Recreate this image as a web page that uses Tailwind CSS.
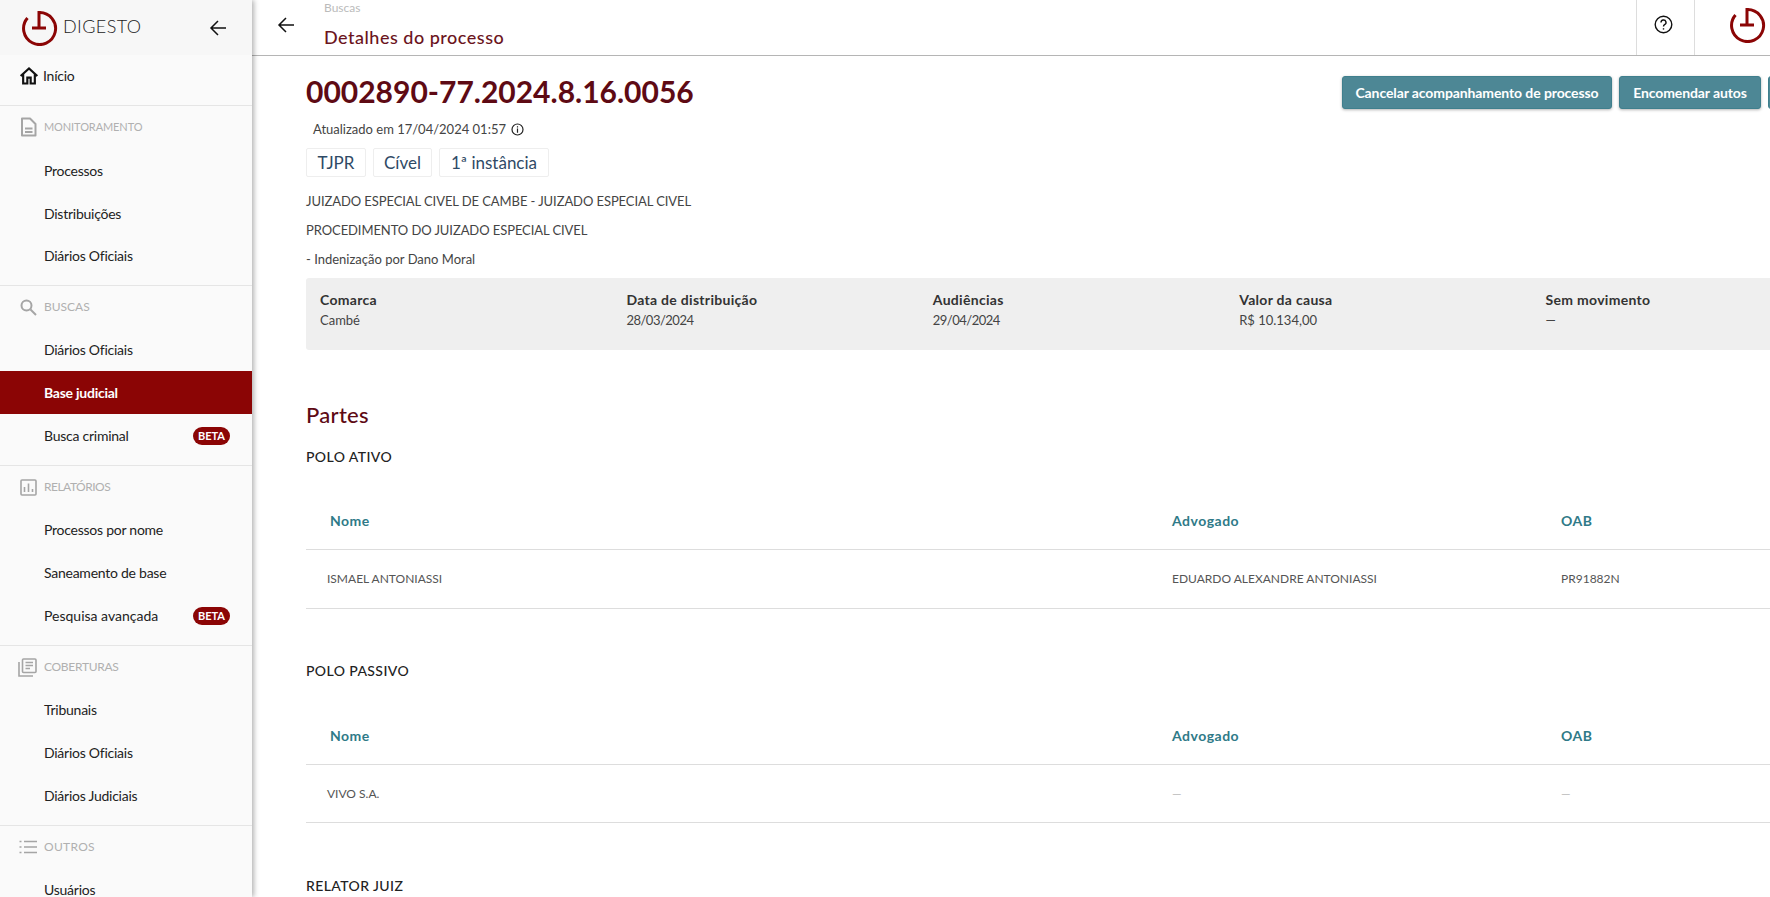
<!DOCTYPE html>
<html lang="pt-BR">
<head>
<meta charset="utf-8">
<title>Detalhes do processo</title>
<script src="https://cdn.jsdelivr.net/npm/@tailwindcss/browser@4"></script>
</head>
<body class="font-['Lato',sans-serif] bg-white text-[#222]">
<div class="flex h-[897px] w-[1770px] overflow-hidden">

  <!-- Sidebar -->
  <aside class="relative z-10 h-full w-[252px] shrink-0 overflow-hidden bg-[#fafafa] tracking-[-0.25px] shadow-[2px_0_5px_rgba(0,0,0,0.3)]">
    <div class="flex h-[55px] items-center bg-[#f7f7f7] pl-[22px]">
      <svg class="h-[36px] w-[36px] shrink-0" viewBox="0 0 36 36" fill="none" stroke="#8b0505" stroke-width="3">
        <path d="M17.5 2.5A16 16 0 1 1 5.5 8"/>
        <path d="M17 1V18M10 18H24"/>
      </svg>
      <span class="ml-[5px] w-[81px] pb-[2px] text-[18px] font-light tracking-[0.4px] text-[#222]">DIGESTO</span>
      <svg class="ml-[-4px] translate-x-[69px] h-[18px] w-[18px]" viewBox="0 0 18 18" fill="none" stroke="#111" stroke-width="1.5"><path d="M17 9H2M9 2L2 9L9 16"/></svg>
    </div>
    <div class="flex h-[50px] items-center pb-[9px] pl-[19px] text-[14px]">
      <svg class="mr-[4px] h-[20px] w-[20px]" viewBox="0 0 24 24" fill="none" stroke="#111" stroke-width="2.6"><path d="M2 12L12 3L22 12M5 10V21H10V14H14V21H19V10"/></svg>
      <span>Início</span>
    </div>

    <div class="border-t border-[#e5e5e5] pb-[8px]">
      <div class="flex h-[42px] items-center pl-[20px] text-[11px] tracking-[-0.1px] text-[#b0b0b0]">
        <svg class="mr-[7px] h-[20px] w-[17px]" viewBox="0 0 17 20" fill="none" stroke="#a5a5a5" stroke-width="2" stroke-linejoin="round"><path d="M2 1.5H10L15.5 7V18.5H2ZM5 11.5H12.5M5 15H12.5"/></svg>
        <span>MONITORAMENTO</span>
      </div>
      <div class="flex h-[43px] items-center pl-[44px] pt-px text-[14px]">Processos</div>
      <div class="flex h-[43px] items-center pl-[44px] pt-px text-[14px]">Distribuições</div>
      <div class="flex h-[43px] items-center pl-[44px] text-[14px]">Diários Oficiais</div>
    </div>

    <div class="border-t border-[#e5e5e5] pb-[8px]">
      <div class="flex h-[42px] items-center pl-[20px] text-[12px] tracking-normal text-[#b0b0b0]">
        <svg class="mr-[7px] h-[17px] w-[17px]" viewBox="0 0 17 17" fill="none" stroke="#a5a5a5" stroke-width="2"><circle cx="6.5" cy="6.5" r="5"/><path d="M10.5 10.5L16 16"/></svg>
        <span>BUSCAS</span>
      </div>
      <div class="flex h-[43px] items-center pl-[44px] text-[14px]">Diários Oficiais</div>
      <div class="flex h-[43px] items-center bg-[#8b0505] pl-[44px] text-[14px] font-bold text-white">Base judicial</div>
      <div class="flex h-[43px] items-center justify-between pl-[44px] pr-[22px] text-[14px]">
        <span>Busca criminal</span>
        <span class="rounded-full bg-[#8b0505] px-[5px] text-[11px] leading-[18px] font-bold tracking-normal text-white">BETA</span>
      </div>
    </div>

    <div class="border-t border-[#e5e5e5] pb-[8px]">
      <div class="flex h-[42px] items-center pl-[20px] text-[12px] tracking-[-0.5px] text-[#b0b0b0]">
        <svg class="mr-[7px] h-[17px] w-[17px]" viewBox="0 0 17 17" fill="none" stroke="#a5a5a5" stroke-width="1.6"><rect x="1" y="1" width="15" height="15" rx="1"/><path d="M4.5 13V8M8.5 13V4.5M12.5 13V10"/></svg>
        <span>RELATÓRIOS</span>
      </div>
      <div class="flex h-[43px] items-center pl-[44px] text-[14px]">Processos por nome</div>
      <div class="flex h-[43px] items-center pl-[44px] text-[14px]">Saneamento de base</div>
      <div class="flex h-[43px] items-center justify-between pl-[44px] pr-[22px] text-[14px]">
        <span class="tracking-normal">Pesquisa avançada</span>
        <span class="rounded-full bg-[#8b0505] px-[5px] text-[11px] leading-[18px] font-bold tracking-normal text-white">BETA</span>
      </div>
    </div>

    <div class="border-t border-[#e5e5e5] pb-[8px]">
      <div class="flex h-[42px] items-center pl-[18px] text-[12px] tracking-[-0.3px] text-[#b0b0b0]">
        <svg class="mr-[7px] h-[19px] w-[19px]" viewBox="0 0 19 19" fill="none" stroke="#a5a5a5" stroke-width="1.6"><path d="M1 4V18H15"/><rect x="4.5" y="1" width="13.5" height="13.5" rx="1"/><path d="M7.5 4.5H15M7.5 7.5H15M7.5 10.5H12"/></svg>
        <span>COBERTURAS</span>
      </div>
      <div class="flex h-[43px] items-center pl-[44px] text-[14px]">Tribunais</div>
      <div class="flex h-[43px] items-center pl-[44px] text-[14px]">Diários Oficiais</div>
      <div class="flex h-[43px] items-center pl-[44px] text-[14px]">Diários Judiciais</div>
    </div>

    <div class="border-t border-[#e5e5e5]">
      <div class="flex h-[42px] items-center pl-[19px] text-[12px] tracking-[0.3px] text-[#b0b0b0]">
        <svg class="mr-[7px] h-[14px] w-[18px]" viewBox="0 0 18 14" fill="none" stroke="#a5a5a5" stroke-width="1.6"><path d="M0.5 1.5H2.5M0.5 7H2.5M0.5 12.5H2.5M5 1.5H18M5 7H18M5 12.5H18"/></svg>
        <span>OUTROS</span>
      </div>
      <div class="flex h-[43px] items-center pl-[44px] text-[14px]">Usuários</div>
    </div>
  </aside>

  <div class="min-w-0 flex-1">
    <!-- Top bar -->
    <header class="flex h-[56px] items-stretch border-b border-[#b5b5b5]">
      <div class="flex w-[72px] shrink-0 items-center pb-[6px] pl-[25px]">
        <svg class="h-[18px] w-[18px]" viewBox="0 0 18 18" fill="none" stroke="#111" stroke-width="1.5"><path d="M17 9H2M9 2L2 9L9 16"/></svg>
      </div>
      <div class="flex-1">
        <div class="pt-px text-[12px] leading-[14px] text-[#bbb]">Buscas</div>
        <div class="pt-[10px] text-[18px] leading-[24px] font-medium tracking-[0.5px] text-[#6b1420]">Detalhes do processo</div>
      </div>
      <div class="flex w-[58px] items-center justify-center border-l border-[#ddd] pb-[6px] pr-[5px]">
        <svg class="h-[19px] w-[19px]" viewBox="0 0 19 19" fill="none" stroke="#111" stroke-width="1.4"><circle cx="9.5" cy="9.5" r="8.3"/><path d="M7 7.4A2.5 2.5 0 1 1 10.6 9.7C9.8 10.2 9.5 10.6 9.5 11.6"/><path d="M9.5 13.2V14.6"/></svg>
      </div>
      <div class="w-[76px] border-l border-[#ddd] pl-[35px] pt-[7px]">
        <svg class="h-[36px] w-[36px]" viewBox="0 0 36 36" fill="none" stroke="#8b0505" stroke-width="3">
          <path d="M17.5 2.5A16 16 0 1 1 5.5 8"/>
          <path d="M17 1V18M10 18H24"/>
        </svg>
      </div>
    </header>

    <!-- Content -->
    <main class="w-[1598px] pl-[54px]">
      <div class="flex items-start justify-between pt-[19px]">
        <h1 class="text-[30px] leading-[32px] font-bold text-[#5e0a14]">0002890-77.2024.8.16.0056</h1>
        <div class="mt-px flex gap-[7px]">
          <button class="h-[33px] w-[270px] rounded-[3px] border border-[#3f7f8d] bg-[#4d8795] text-[14px] font-bold tracking-[-0.1px] text-white shadow-[0_1px_3px_rgba(0,0,0,0.3)]">Cancelar acompanhamento de processo</button>
          <button class="h-[33px] w-[142px] rounded-[3px] border border-[#3f7f8d] bg-[#4d8795] text-[14px] font-bold tracking-[-0.1px] text-white shadow-[0_1px_3px_rgba(0,0,0,0.3)]">Encomendar autos</button>
          <button class="h-[33px] w-[82px] rounded-[3px] border border-[#3f7f8d] bg-[#4d8795]"></button>
        </div>
      </div>
      <div class="flex items-center gap-[5px] pl-[7px] pt-[10px] text-[13px] leading-[20px] text-[#444]">
        <span>Atualizado em 17/04/2024 01:57</span>
        <svg class="h-[13px] w-[13px]" viewBox="0 0 13 13" fill="none" stroke="#222" stroke-width="1.2"><circle cx="6.5" cy="6.5" r="5.5"/><path d="M6.5 5.5V9.7M6.5 3.2V4.4"/></svg>
      </div>
      <div class="flex gap-[7px] pt-[9px] text-[17px] text-[#2f4a66]">
        <span class="flex h-[29px] w-[60px] items-center justify-center rounded-[2px] border border-[#eee]">TJPR</span>
        <span class="flex h-[29px] w-[59px] items-center justify-center rounded-[2px] border border-[#eee]">Cível</span>
        <span class="flex h-[29px] w-[110px] items-center justify-center rounded-[2px] border border-[#eee]">1ª instância</span>
      </div>
      <p class="pt-[14px] text-[13px] leading-[20px] tracking-[-0.08px] text-[#444]">JUIZADO ESPECIAL CIVEL DE CAMBE - JUIZADO ESPECIAL CIVEL</p>
      <p class="pt-[9px] text-[13px] leading-[20px] tracking-[-0.08px] text-[#444]">PROCEDIMENTO DO JUIZADO ESPECIAL CIVEL</p>
      <p class="pt-[9px] text-[13px] leading-[20px] text-[#444]">- Indenização por Dano Moral</p>

      <div class="mt-[9px] grid h-[72px] grid-cols-[repeat(5,306.4px)] rounded-[3px] bg-[#efefef] pl-[14px] pt-[12px]">
        <div><div class="text-[14px] leading-[20px] font-bold tracking-[0.3px] text-[#333]">Comarca</div><div class="text-[13px] leading-[20px] text-[#444]">Cambé</div></div>
        <div><div class="text-[14px] leading-[20px] font-bold tracking-[0.3px] text-[#333]">Data de distribuição</div><div class="text-[13px] leading-[20px] tracking-[-0.5px] text-[#444]">28/03/2024</div></div>
        <div><div class="text-[14px] leading-[20px] font-bold tracking-[0.3px] text-[#333]">Audiências</div><div class="text-[13px] leading-[20px] tracking-[-0.5px] text-[#444]">29/04/2024</div></div>
        <div><div class="text-[14px] leading-[20px] font-bold tracking-[0.3px] text-[#333]">Valor da causa</div><div class="text-[13px] leading-[20px] text-[#444]">R$ 10.134,00</div></div>
        <div><div class="text-[14px] leading-[20px] font-bold tracking-[0.3px] text-[#333]">Sem movimento</div><div class="text-[13px] leading-[20px] text-[#444]">—</div></div>
      </div>

      <h2 class="pt-[50px] text-[22px] leading-[30px] font-medium tracking-[0.3px] text-[#5e0a14]">Partes</h2>

      <h3 class="pt-[17px] text-[14px] leading-[20px] font-medium tracking-[0.4px] text-[#222]">POLO ATIVO</h3>
      <div class="mt-[23px] grid h-[60px] grid-cols-[842px_389px_1fr] items-center border-b border-[#ddd] pt-[2px] pl-[24px] text-[14px] font-bold tracking-[0.5px] text-[#2f7a88]">
        <span>Nome</span><span>Advogado</span><span>OAB</span>
      </div>
      <div class="grid h-[59px] grid-cols-[845px_389px_1fr] items-center border-b border-[#ddd] pl-[21px] text-[12px] text-[#555]">
        <span>ISMAEL ANTONIASSI</span><span>EDUARDO ALEXANDRE ANTONIASSI</span><span>PR91882N</span>
      </div>

      <h3 class="pt-[52px] text-[14px] leading-[20px] font-medium tracking-[0.4px] text-[#222]">POLO PASSIVO</h3>
      <div class="mt-[24px] grid h-[60px] grid-cols-[842px_389px_1fr] items-center border-b border-[#ddd] pt-[2px] pl-[24px] text-[14px] font-bold tracking-[0.5px] text-[#2f7a88]">
        <span>Nome</span><span>Advogado</span><span>OAB</span>
      </div>
      <div class="grid h-[58px] grid-cols-[845px_389px_1fr] items-center border-b border-[#ddd] pl-[21px] text-[12px] text-[#555]">
        <span>VIVO S.A.</span><span class="text-[#bbb]">—</span><span class="text-[#bbb]">—</span>
      </div>

      <h3 class="pt-[53px] text-[14px] leading-[20px] font-medium tracking-[0.4px] text-[#222]">RELATOR JUIZ</h3>
    </main>
  </div>
</div>
</body>
</html>
